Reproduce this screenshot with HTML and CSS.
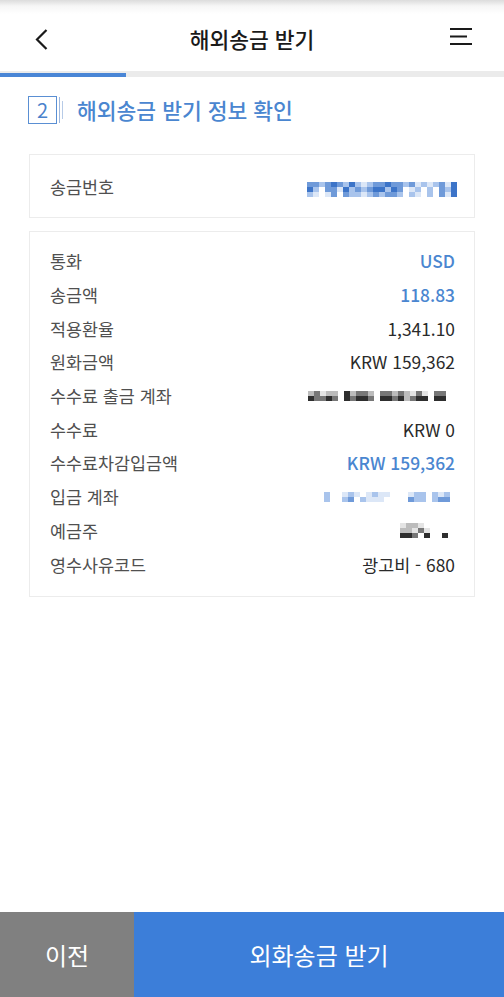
FILE: index.html
```html
<!DOCTYPE html>
<html lang="ko">
<head>
<meta charset="utf-8">
<title>해외송금 받기</title>
<link rel="stylesheet" href="styles.css">
</head>
<body>
<div class="page">
  <header class="topbar">
    <button class="icon-btn back" aria-label="뒤로">
      <svg width="24" height="24" viewBox="0 0 24 24"><path d="M15.5 3 L6 12.5 L15.5 22" fill="none" stroke="#1a1a1a" stroke-width="2.2" stroke-linecap="butt" stroke-linejoin="miter"/></svg>
    </button>
    <h1 class="title">해외송금 받기</h1>
    <button class="icon-btn menu" aria-label="메뉴">
      <svg width="24" height="24" viewBox="0 0 24 24"><path d="M1 2 H23 M1 9.5 H18 M1 17 H23" fill="none" stroke="#1a1a1a" stroke-width="2.2"/></svg>
    </button>
  </header>
  <div class="progress"><div class="progress-fill"></div></div>

  <main class="content">
    <div class="step">
      <span class="step-num">2</span>
      <span class="step-lines"><i class="l1"></i><i class="l2"></i></span>
      <h2 class="step-title">해외송금 받기 정보 확인</h2>
    </div>

    <section class="card card-single">
      <div class="row">
        <span class="label">송금번호</span>
        <span class="mosaic m-ref">
          <i class="b3"></i><i class="b3"></i><i class="b2"></i><i class="b3"></i><i class="b4"></i><i class="b3"></i><i class="b2"></i><i class="b4"></i><i class="b2"></i><i class="b1"></i><i class="b2"></i><i class="b3"></i><i class="b3"></i><i class="b4"></i><i class="b3"></i><i class="b3"></i><i class="b2"></i><i class="b3"></i><i class="b1"></i><i class="b2"></i><i class="b1"></i><i class="b2"></i><i class="b3"></i><i class="b1"></i><i class="b4"></i>
          <i class="b4"></i><i class="b2"></i><i class="w"></i><i class="b3"></i><i class="b3"></i><i class="b1"></i><i class="b4"></i><i class="b2"></i><i class="b3"></i><i class="b2"></i><i class="b3"></i><i class="b4"></i><i class="b4"></i><i class="b2"></i><i class="b4"></i><i class="b3"></i><i class="w"></i><i class="b1"></i><i class="b2"></i><i class="w"></i><i class="b2"></i><i class="w"></i><i class="b3"></i><i class="b2"></i><i class="b4"></i>
          <i class="b2"></i><i class="b1"></i><i class="w"></i><i class="b1"></i><i class="b3"></i><i class="w"></i><i class="b3"></i><i class="b2"></i><i class="b2"></i><i class="b1"></i><i class="b2"></i><i class="b3"></i><i class="b2"></i><i class="b3"></i><i class="b3"></i><i class="b2"></i><i class="w"></i><i class="b2"></i><i class="b1"></i><i class="w"></i><i class="b2"></i><i class="w"></i><i class="b3"></i><i class="b1"></i><i class="b4"></i>
        </span>
      </div>
    </section>

    <section class="card card-list">
      <div class="row"><span class="label">통화</span><span class="value blue">USD</span></div>
      <div class="row"><span class="label">송금액</span><span class="value blue">118.83</span></div>
      <div class="row"><span class="label">적용환율</span><span class="value">1,341.10</span></div>
      <div class="row"><span class="label">원화금액</span><span class="value">KRW 159,362</span></div>
      <div class="row"><span class="label">수수료 출금 계좌</span>
        <span class="mosaic m-fee">
          <i class="g2"></i><i class="g3"></i><i class="g1"></i><i class="g2"></i><i class="g2"></i><i class="w"></i><i class="g4"></i><i class="g2"></i><i class="g3"></i><i class="g3"></i><i class="g2"></i><i class="w"></i><i class="g3"></i><i class="g3"></i><i class="g2"></i><i class="g3"></i><i class="g2"></i><i class="g1"></i><i class="g3"></i><i class="g1"></i><i class="w"></i><i class="g3"></i><i class="g3"></i>
          <i class="g4"></i><i class="g3"></i><i class="g3"></i><i class="g4"></i><i class="g3"></i><i class="w"></i><i class="g4"></i><i class="g3"></i><i class="g4"></i><i class="g4"></i><i class="g3"></i><i class="w"></i><i class="g4"></i><i class="g4"></i><i class="g3"></i><i class="g4"></i><i class="g2"></i><i class="g3"></i><i class="g4"></i><i class="g4"></i><i class="w"></i><i class="g4"></i><i class="g4"></i>
        </span>
      </div>
      <div class="row"><span class="label">수수료</span><span class="value">KRW 0</span></div>
      <div class="row"><span class="label">수수료차감입금액</span><span class="value blue">KRW 159,362</span></div>
      <div class="row"><span class="label">입금 계좌</span>
        <span class="mosaic m-acct">
          <i class="b2"></i><i class="w"></i><i class="w"></i><i class="b1"></i><i class="b2"></i><i class="b1"></i><i class="w"></i><i class="b1"></i><i class="b2"></i><i class="b1"></i><i class="b1"></i><i class="w"></i><i class="w"></i><i class="w"></i><i class="b1"></i><i class="b2"></i><i class="b2"></i><i class="w"></i><i class="b2"></i><i class="b1"></i><i class="b2"></i>
          <i class="b2"></i><i class="w"></i><i class="w"></i><i class="b2"></i><i class="b3"></i><i class="w"></i><i class="b2"></i><i class="b1"></i><i class="b1"></i><i class="b1"></i><i class="w"></i><i class="w"></i><i class="w"></i><i class="w"></i><i class="b3"></i><i class="b2"></i><i class="b2"></i><i class="w"></i><i class="b2"></i><i class="b3"></i><i class="b3"></i>
        </span>
      </div>
      <div class="row"><span class="label">예금주</span>
        <span class="mosaic m-name">
          <i class="g1"></i><i class="g2"></i><i class="g2"></i><i class="g1"></i><i class="w"></i><i class="w"></i><i class="w"></i><i class="w"></i>
          <i class="g2"></i><i class="g2"></i><i class="g1"></i><i class="g3"></i><i class="g1"></i><i class="w"></i><i class="w"></i><i class="w"></i>
          <i class="g4"></i><i class="g4"></i><i class="g3"></i><i class="w"></i><i class="g4"></i><i class="w"></i><i class="w"></i><i class="g4"></i>
        </span>
      </div>
      <div class="row"><span class="label">영수사유코드</span><span class="value">광고비 - 680</span></div>
    </section>
  </main>

  <footer class="actions">
    <button class="btn btn-prev">이전</button>
    <button class="btn btn-next">외화송금 받기</button>
  </footer>
</div>
</body>
</html>
```

FILE: styles.css
```css
* { box-sizing: border-box; }
html, body { margin: 0; padding: 0; }
body {
  font-family: "Noto Sans CJK KR", "Noto Sans", sans-serif;
  background: #ffffff;
  color: #222;
}
.page {
  width: 504px;
  height: 997px;
  display: flex;
  flex-direction: column;
}
.topbar {
  height: 71px;
  display: flex;
  align-items: center;
  justify-content: space-between;
  padding: 6px 31px 0 31px;
  background: linear-gradient(#dcdcdc 0px, #f6f6f6 6px, #ffffff 14px);
}
.icon-btn {
  border: 0;
  background: none;
  padding: 0;
  width: 24px;
  height: 24px;
  display: flex;
}
.title {
  margin: 0;
  font-size: 21.5px;
  font-weight: 500;
  color: #1a1a1a;
  letter-spacing: 0;
}
.progress {
  height: 6px;
  background: #ebebeb;
  display: flex;
  align-items: flex-end;
}
.progress-fill {
  width: 126px;
  height: 4px;
  background: #4a86d6;
}
.content {
  padding: 19px 29px 0 29px;
  display: flex;
  flex-direction: column;
}
.step {
  display: flex;
  align-items: center;
  height: 28px;
  margin-left: -1px;
}
.step-num {
  width: 29px;
  height: 28px;
  border: 1px solid #5a8fd3;
  color: #4a82cc;
  font-size: 20px;
  line-height: 25px;
  text-align: center;
  font-weight: 400;
}
.step-lines {
  display: flex;
  align-items: center;
  gap: 2px;
  margin-left: 2px;
  height: 28px;
}
.step-lines i { display: block; width: 1px; background: #9db8df; }
.step-lines .l1 { height: 26px; }
.step-lines .l2 { height: 18px; background: #b7cbe7; }
.step-title {
  margin: 0 0 0 14px;
  font-size: 21.5px;
  font-weight: 500;
  color: #4a86d0;
  line-height: 28px;
}
.card {
  border: 1px solid #ececec;
  background: #fff;
}
.card-single {
  margin-top: 30px;
  height: 64px;
  display: flex;
  align-items: center;
  padding: 0 17px 0 20px;
}
.card-single .row { width: 100%; }
.card-list {
  margin-top: 13px;
  height: 366px;
  padding: 12px 19px 0 20px;
}
.row {
  display: flex;
  justify-content: space-between;
  align-items: center;
  height: 33.7px;
}
.label {
  font-size: 17.4px;
  color: #505050;
}
.value {
  font-size: 17.4px;
  color: #2a2a2a;
}
.value.blue { color: #4a86d0; font-weight: 500; }
.mosaic {
  display: grid;
  grid-auto-rows: 6px;
}
.mosaic i { display: block; }
.m-ref { grid-template-columns: repeat(25, 6px); grid-auto-rows: 5px; margin-top: 6px; }
.m-fee { grid-template-columns: repeat(23, 6px); margin-right: 9px; grid-auto-rows: 5px; }
.m-acct { grid-template-columns: repeat(21, 6px); grid-auto-rows: 5px; margin-right: 5px; }
.m-name { grid-template-columns: repeat(8, 6px); grid-auto-rows: 5px; margin-right: 7px; }
.w { background: transparent; }
.b1 { background: #dce7f7; }
.b2 { background: #a9c4ec; }
.b3 { background: #6f9ad9; }
.b4 { background: #3c74c8; }
.g1 { background: #e4e4e4; }
.g2 { background: #bcbcbc; }
.g3 { background: #777777; }
.g4 { background: #2e2e2e; }
.actions {
  margin-top: auto;
  height: 85px;
  display: flex;
}
.btn {
  border: 0;
  margin: 0;
  font-family: inherit;
  font-size: 24px;
  color: #ffffff;
  font-weight: 400;
}
.btn-prev { width: 134px; background: #808080; }
.btn-next { flex: 1; background: #3c7ed9; }
```
